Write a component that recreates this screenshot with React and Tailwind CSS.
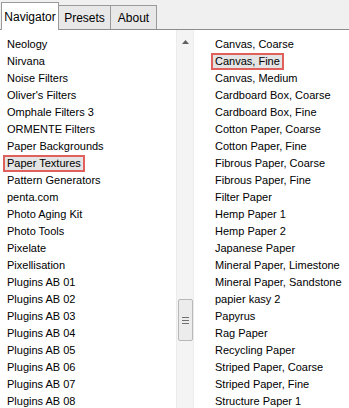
const LEFT = [
  'Neology', 'Nirvana', 'Noise Filters', "Oliver's Filters", 'Omphale Filters 3',
  'ORMENTE Filters', 'Paper Backgrounds', 'Paper Textures', 'Pattern Generators',
  'penta.com', 'Photo Aging Kit', 'Photo Tools', 'Pixelate', 'Pixellisation',
  'Plugins AB 01', 'Plugins AB 02', 'Plugins AB 03', 'Plugins AB 04',
  'Plugins AB 05', 'Plugins AB 06', 'Plugins AB 07', 'Plugins AB 08',
];

const RIGHT = [
  'Canvas, Coarse', 'Canvas, Fine', 'Canvas, Medium', 'Cardboard Box, Coarse',
  'Cardboard Box, Fine', 'Cotton Paper, Coarse', 'Cotton Paper, Fine',
  'Fibrous Paper, Coarse', 'Fibrous Paper, Fine', 'Filter Paper', 'Hemp Paper 1',
  'Hemp Paper 2', 'Japanese Paper', 'Mineral Paper, Limestone',
  'Mineral Paper, Sandstone', 'papier kasy 2', 'Papyrus', 'Rag Paper',
  'Recycling Paper', 'Striped Paper, Coarse', 'Striped Paper, Fine', 'Structure Paper 1',
];

function Item({ label, marked }) {
  return (
    <div className="h-[17px] flex items-center whitespace-nowrap">
      <span
        className={
          marked
            ? 'px-[2px] -mx-[4px] h-[17px] flex items-center border-2 border-[#e0605c] bg-[#e4e4e4]'
            : ''
        }
      >
        {label}
      </span>
    </div>
  );
}

export default function App() {
  return (
    <div className="w-[349px] h-[408px] overflow-hidden bg-white text-[11px] text-black" style={{ fontFamily: '"Liberation Sans", Arial, sans-serif' }}>
      <div className="h-[30px] bg-[#f0f0f0] border-b border-[#8c8c8c] flex items-end pl-[1px]">
        <div className="h-[28px] w-[58px] bg-white border border-b-0 border-[#9a9a9a] flex items-center justify-center text-[12px] relative top-[1px]">
          Navigator
        </div>
        <div className="h-[24px] w-[52px] bg-[#e8e8e8] border border-b-0 border-l-0 border-[#9a9a9a] flex items-center justify-center text-[12px]">
          Presets
        </div>
        <div className="h-[24px] w-[46px] bg-[#e8e8e8] border border-b-0 border-l-0 border-[#9a9a9a] flex items-center justify-center text-[12px]">
          About
        </div>
      </div>
      <div className="flex">
        <div className="w-[176px] pl-[7px] pt-[6px]">
          {LEFT.map((l) => (
            <Item key={l} label={l} marked={l === 'Paper Textures'} />
          ))}
        </div>
        <div className="w-[18px] h-[378px] bg-[#f4f4f4] border-x border-[#ececec] flex flex-col items-center pt-[10px]">
          <svg width="7" height="4" viewBox="0 0 7 4"><path d="M0 4 L3.5 0 L7 4 Z" fill="#606060" /></svg>
          <div className="mt-[255px] w-[15px] h-[42px] bg-[#ececec] border border-[#b8b8b8] rounded-[2px] flex flex-col items-center justify-center gap-[2px]">
            <div className="w-[7px] h-px bg-[#707070]" />
            <div className="w-[7px] h-px bg-[#707070]" />
            <div className="w-[7px] h-px bg-[#707070]" />
          </div>
        </div>
        <div className="flex-1 pl-[21px] pt-[6px]">
          {RIGHT.map((l) => (
            <Item key={l} label={l} marked={l === 'Canvas, Fine'} />
          ))}
        </div>
      </div>
    </div>
  );
}
